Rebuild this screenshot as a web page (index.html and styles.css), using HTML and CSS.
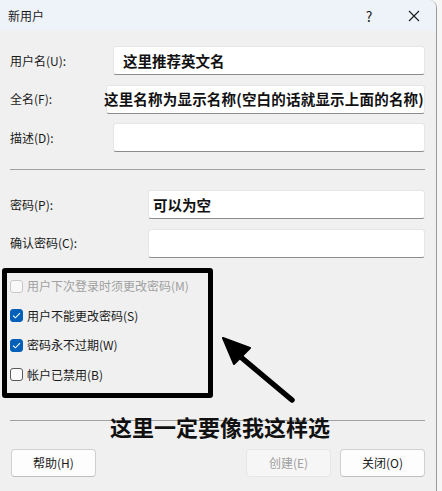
FILE: index.html
```html
<!DOCTYPE html>
<html lang="zh">
<head>
<meta charset="utf-8">
<link rel="stylesheet" href="styles.css">
</head>
<body>
<div class="window">
  <div class="titlebar">
    <span class="title">新用户</span>
    <span class="help-q">?</span>
    <span class="close-x">
      <svg width="12" height="12" viewBox="0 0 12 12"><path d="M1 1 L11 11 M11 1 L1 11" stroke="#1a1a1a" stroke-width="1.1" fill="none"/></svg>
    </span>
  </div>
  <div class="content">
    <div class="form form-a">
      <div class="row"><span class="label">用户名(U):</span><div class="field"><span class="val pad10">这里推荐英文名</span></div></div>
      <div class="row"><span class="label">全名(F):</span><div class="field"><span class="val neg">这里名称为显示名称(空白的话就显示上面的名称)</span></div></div>
      <div class="row"><span class="label">描述(D):</span><div class="field"></div></div>
    </div>
    <div class="sep sep1"></div>
    <div class="form form-b">
      <div class="row"><span class="label">密码(P):</span><div class="field"><span class="val pad5">可以为空</span></div></div>
      <div class="row"><span class="label">确认密码(C):</span><div class="field"></div></div>
    </div>
    <div class="checks">
      <div class="check disabled"><span class="box"></span><span>用户下次登录时须更改密码(M)</span></div>
      <div class="check"><span class="box on"><svg width="9" height="7" viewBox="0 0 9 7"><path d="M1 3.6 L3.4 5.8 L8 1.2" stroke="#fff" stroke-width="1.1" fill="none"/></svg></span><span>用户不能更改密码(S)</span></div>
      <div class="check"><span class="box on"><svg width="9" height="7" viewBox="0 0 9 7"><path d="M1 3.6 L3.4 5.8 L8 1.2" stroke="#fff" stroke-width="1.1" fill="none"/></svg></span><span>密码永不过期(W)</span></div>
      <div class="check"><span class="box"></span><span>帐户已禁用(B)</span></div>
    </div>
    <div class="sep sep2"></div>
    <div class="buttons">
      <button class="btn">帮助(H)</button>
      <span class="spacer"></span>
      <button class="btn btn-disabled">创建(E)</button>
      <button class="btn">关闭(O)</button>
    </div>
  </div>
  <div class="mark-box"></div>
  <svg class="mark-arrow" width="80" height="72" viewBox="0 0 80 72">
    <path d="M70 64 L8 12" stroke="#000" stroke-width="5.5" stroke-linecap="round" fill="none"/>
    <path d="M1 2 L28 12 L12 28 Z" fill="#000" stroke="#000" stroke-width="2" stroke-linejoin="round"/>
  </svg>
  <div class="mark-text">这里一定要像我这样选</div>
</div>
</body>
</html>
```

FILE: styles.css
```css
html, body {
  margin: 0;
  padding: 0;
  background: #f6f6f6;
}
body {
  width: 442px;
  height: 491px;
  overflow: hidden;
  font-family: "Microsoft YaHei UI", "Noto Sans CJK SC", "Noto Sans", sans-serif;
  font-size: 12px;
  color: #1a1a1a;
}
.window {
  position: relative;
  width: 436px;
  height: 491px;
  background: #f0f0f0;
  border-right: 1px solid #9a9a9a;
  border-top-right-radius: 8px;
  overflow: hidden;
}
.titlebar {
  height: 31px;
  background: #eef3f9;
  display: flex;
  align-items: center;
  padding-left: 8px;
  box-sizing: border-box;
}
.title {
  font-size: 12px;
  line-height: 16px;
  flex: 1;
}
.help-q {
  font-size: 14px;
  line-height: 16px;
  width: 16px;
  text-align: center;
  margin-right: 31px;
}
.close-x {
  display: flex;
  width: 12px;
  height: 12px;
  margin-right: 16px;
}
.content {
  padding: 0 11px 0 10px;
}
.form {
  display: flex;
  flex-direction: column;
  gap: 9.5px;
}
.form-a { margin-top: 15px; }
.form-b { margin-top: 20px; }
.row {
  display: flex;
  align-items: center;
  height: 29px;
}
.label {
  line-height: 16px;
  white-space: nowrap;
}
.form-a .label { width: 103px; }
.form-b .label { width: 138px; }
.field {
  flex: 1;
  height: 29px;
  box-sizing: border-box;
  background: #ffffff;
  border: 1px solid #e6e6e6;
  border-bottom: 1px solid #8c8c8c;
  border-radius: 3px;
  display: flex;
  align-items: center;
  overflow: visible;
}
.val {
  font-size: 14.5px;
  font-weight: bold;
  color: #111;
  line-height: 18px;
  white-space: nowrap;
}
.pad10 { margin-left: 9px; }
.pad5 { margin-left: 4px; }
.neg { margin-left: -3px; letter-spacing: 0.2px; }
.sep {
  height: 1px;
  background: #a0a0a0;
}
.sep1 { margin-top: 17px; }
.sep2 { margin-top: 30px; }
.checks {
  margin-top: 14px;
  display: flex;
  flex-direction: column;
}
.check {
  height: 29.5px;
  display: flex;
  align-items: center;
  gap: 4px;
  line-height: 16px;
}
.box {
  width: 13px;
  height: 13px;
  box-sizing: border-box;
  border: 1px solid #5a5a5a;
  border-radius: 3px;
  background: #fbfbfb;
  display: flex;
  align-items: center;
  justify-content: center;
}
.box.on {
  background: #005fb8;
  border-color: #005fb8;
}
.check.disabled { color: #a0a0a0; }
.check.disabled .box { border-color: #c8c8c8; background: #f8f8f8; }
.buttons {
  margin-top: 28px;
  display: flex;
  align-items: center;
  gap: 9px;
  padding-left: 1px;
}
.spacer { flex: 1; }
.btn {
  width: 85px;
  height: 28px;
  box-sizing: border-box;
  background: #fdfdfd;
  border: 1px solid #d0d0d0;
  border-bottom-color: #bdbdbd;
  border-radius: 4px;
  font-family: inherit;
  font-size: 12px;
  color: #1a1a1a;
  padding: 0;
}
.btn-disabled {
  background: #f6f6f6;
  border-color: #e6e6e6;
  color: #a0a0a0;
}
.mark-box {
  position: absolute;
  left: 2px;
  top: 268px;
  width: 211px;
  height: 130px;
  box-sizing: border-box;
  border: 5px solid #000;
  border-radius: 3px;
}
.mark-arrow {
  position: absolute;
  left: 222px;
  top: 336px;
}
.mark-text {
  position: absolute;
  left: 110px;
  top: 412px;
  font-size: 22px;
  font-weight: bold;
  line-height: 28px;
  color: #111;
  white-space: nowrap;
}
```
